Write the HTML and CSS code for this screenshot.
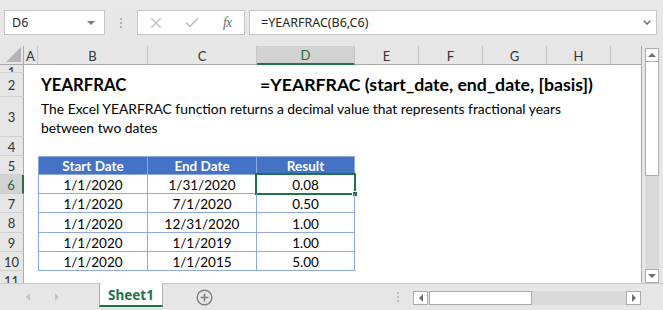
FILE: index.html
```html
<!DOCTYPE html>
<html>
<head>
<meta charset="utf-8">
<title>YEARFRAC</title>
<link rel="stylesheet" href="styles.css">
</head>
<body>
<div class="app">
  <div class="fbar">
    <div class="namebox"><span>D6</span><span class="caret"></span></div>
    <div class="grip"><i></i><i></i><i></i></div>
    <div class="fxbox">
      <svg class="ic-x" width="12" height="10" viewBox="0 0 12 10"><path d="M1.5 0.5 L10.5 9.5 M10.5 0.5 L1.5 9.5" stroke="#bdbdbd" stroke-width="1.3" fill="none"/></svg>
      <svg class="ic-ok" width="14" height="11" viewBox="0 0 14 11"><path d="M1 5.5 L5 9.5 L13 1" stroke="#bdbdbd" stroke-width="1.5" fill="none"/></svg>
      <span class="fx">fx</span>
    </div>
    <div class="finput">
      <span>=YEARFRAC(B6,C6)</span>
      <svg width="8" height="5" viewBox="0 0 8 5"><path d="M0.8 0.8 L4 4 L7.2 0.8" stroke="#6e6e6e" stroke-width="1.5" fill="none"/></svg>
    </div>
  </div>

  <div class="main">
    <div class="sheetwrap">
      <div class="row colhdr">
        <div class="ch corner"><svg width="15" height="15" viewBox="0 0 15 15"><polygon points="15,0 15,15 0,15" fill="#b4b4b4"/></svg></div>
        <div class="ch">A</div>
        <div class="ch">B</div>
        <div class="ch">C</div>
        <div class="ch active">D</div>
        <div class="ch">E</div>
        <div class="ch">F</div>
        <div class="ch">G</div>
        <div class="ch">H</div>
        <div class="ch last"></div>
      </div>

      <div class="row r1"><div class="rh">1</div></div>

      <div class="row r2">
        <div class="rh">2</div>
        <div class="cell title tB">YEARFRAC</div>
        <div class="cell title tD">=YEARFRAC (start_date, end_date, [basis])</div>
      </div>

      <div class="row r3">
        <div class="rh">3</div>
        <div class="cell desc">The Excel YEARFRAC function returns a decimal value that represents fractional years<br>between two dates</div>
      </div>

      <div class="row r4"><div class="rh">4</div></div>

      <div class="row r19">
        <div class="rh">5</div>
        <div class="tc th first top">Start Date</div>
        <div class="tc th top">End Date</div>
        <div class="tc th top">Result</div>
      </div>

      <div class="row r19">
        <div class="rh active">6</div>
        <div class="tc first">1/1/2020</div>
        <div class="tc">1/31/2020</div>
        <div class="tc sel">0.08<span class="selbox"></span><span class="handle"></span></div>
      </div>

      <div class="row r19">
        <div class="rh">7</div>
        <div class="tc first">1/1/2020</div>
        <div class="tc">7/1/2020</div>
        <div class="tc">0.50</div>
      </div>

      <div class="row r20">
        <div class="rh">8</div>
        <div class="tc first">1/1/2020</div>
        <div class="tc">12/31/2020</div>
        <div class="tc">1.00</div>
      </div>

      <div class="row r19">
        <div class="rh">9</div>
        <div class="tc first">1/1/2020</div>
        <div class="tc">1/1/2019</div>
        <div class="tc">1.00</div>
      </div>

      <div class="row r19">
        <div class="rh">10</div>
        <div class="tc first">1/1/2020</div>
        <div class="tc">1/1/2015</div>
        <div class="tc">5.00</div>
      </div>

      <div class="row r19"><div class="rh">11</div></div>
    </div>

    <div class="vscroll">
      <div class="sbtn"><span class="tri-up"></span></div>
      <div class="vthumb"></div>
      <div class="vtrack"></div>
      <div class="sbtn"><span class="tri-down"></span></div>
    </div>
  </div>

  <div class="tabbar">
    <div class="nav"><span class="tri-left"></span><span class="tri-right"></span></div>
    <div class="tab">Sheet1</div>
    <svg class="plus" width="17" height="17" viewBox="0 0 17 17"><circle cx="8.5" cy="8.5" r="7.3" stroke="#7f7f7f" stroke-width="1.4" fill="none"/><path d="M8.5 4.6 V12.4 M4.6 8.5 H12.4" stroke="#7f7f7f" stroke-width="1.6"/></svg>
    <div class="hgrip"><i></i><i></i><i></i></div>
    <div class="hscroll">
      <div class="sbtn h"><span class="tri-l"></span></div>
      <div class="hthumb"></div>
      <div class="htrack"></div>
      <div class="sbtn h"><span class="tri-r"></span></div>
    </div>
  </div>
</div>
</body>
</html>
```

FILE: styles.css
```css
* { box-sizing: border-box; margin: 0; padding: 0; }

body {
  width: 663px;
  height: 310px;
  overflow: hidden;
  background: #e6e6e6;
  font-family: Lato, "Open Sans", sans-serif;
  color: #000;
}

.app {
  display: flex;
  flex-direction: column;
  height: 310px;
}

/* ---------- formula bar ---------- */
.fbar {
  height: 46px;
  display: flex;
  align-items: flex-start;
  padding: 10px 6px 0 4px;
  background: linear-gradient(#e9e9e9, #e6e6e6);
}

.namebox {
  width: 101px;
  height: 25px;
  background: #fff;
  border: 1px solid #c6c6c6;
  display: flex;
  align-items: center;
  justify-content: space-between;
  padding: 0 9px 0 7px;
  font: 12.5px "Noto Sans", sans-serif;
  color: #262626;
}

.caret {
  width: 0;
  height: 0;
  border-left: 4px solid transparent;
  border-right: 4px solid transparent;
  border-top: 4px solid #7a7a7a;
}

.grip {
  width: 32px;
  height: 25px;
  display: flex;
  flex-direction: column;
  align-items: center;
  justify-content: center;
  gap: 2px;
}

.grip i, .hgrip i {
  display: block;
  width: 2px;
  height: 2px;
  background: #b4b4b4;
}

.fxbox {
  width: 108px;
  height: 25px;
  background: #fff;
  border: 1px solid #c6c6c6;
  display: flex;
  align-items: center;
  padding-left: 12px;
}

.ic-x { margin-right: 23px; }
.ic-ok { margin-right: 24px; }

.fx {
  font: italic 14px "Liberation Serif", serif;
  color: #6e6e6e;
  letter-spacing: -1px;
}

.finput {
  flex: 1;
  margin-left: 4px;
  height: 25px;
  background: #fff;
  border: 1px solid #c6c6c6;
  display: flex;
  align-items: center;
  justify-content: space-between;
  padding: 0 5px 0 11px;
  font: 12.5px "Noto Sans", sans-serif;
  color: #262626;
}

/* ---------- sheet ---------- */
.main {
  height: 237px;
  display: flex;
  align-items: flex-start;
}

.sheetwrap {
  width: 642px;
  height: 237px;
  overflow: hidden;
  background: #fff;
  border-right: 1px solid #ababab;
}

.row {
  display: grid;
  grid-template-columns: 24px 14px 110px 109px 98px 64px 64px 64px 64px 30px;
  height: 19px;
}

.colhdr {
  background: #e6e6e6;
}

.r1 { height: 8px; overflow: hidden; }
.r2 { height: 24px; }
.r3 { height: 40px; }
.r4 { height: 19px; }
.r19 { height: 19px; }
.r20 { height: 20px; }

.ch {
  display: flex;
  align-items: center;
  justify-content: center;
  font-size: 13px;
  color: #333;
  border-right: 1px solid #c6c6c6;
  border-bottom: 1px solid #ababab;
  padding-top: 1px;
}

.ch.corner {
  justify-content: flex-end;
  align-items: flex-end;
  padding: 0 2px 2px 0;
  border-right: 1px solid #ababab;
}

.ch.corner svg { display: block; }

.ch.active {
  background: #d2d2d2;
  color: #1e6b40;
  border-bottom: 2px solid #217346;
}

.ch.last { border-right: none; }

.rh {
  grid-column: 1;
  background: #e6e6e6;
  border-right: 1px solid #ababab;
  border-bottom: 1px solid #d0d0d0;
  display: flex;
  align-items: center;
  justify-content: center;
  font-size: 13px;
  color: #333;
  padding-top: 1px;
  overflow: hidden;
}

.r1 .rh { align-items: flex-start; padding-top: 0; line-height: 14px; height: 8px; }

.rh.active {
  background: #d2d2d2;
  color: #1e6b40;
  border-right: 2px solid #217346;
}

.cell {
  display: flex;
  align-items: flex-end;
  padding-left: 3px;
  white-space: nowrap;
}

.title {
  font-weight: 700;
  font-size: 16.7px;
  line-height: 20px;
  padding-bottom: 2px;
}

.tB { grid-column: 3 / span 2; }
.tD { grid-column: 5 / span 5; font-size: 17.7px; }

.desc {
  grid-column: 3 / span 7;
  font-size: 13.85px;
  line-height: 19px;
  white-space: normal;
  display: block;
  align-self: end;
}

/* ---------- table ---------- */
.tc {
  display: flex;
  align-items: flex-end;
  justify-content: center;
  font-size: 13.5px;
  line-height: 16px;
  border-right: 1px solid #8eaadb;
  border-bottom: 1px solid #8eaadb;
  position: relative;
}

.tc.first { grid-column: 3; border-left: 1px solid #8eaadb; }
.tc.top { border-top: 1px solid #8eaadb; }

.tc.th {
  background: #4472c4;
  color: #fff;
  font-weight: 700;
}

.selbox {
  position: absolute;
  left: -2px;
  top: -2px;
  right: -2px;
  bottom: -2px;
  border: 2px solid #217346;
}

.handle {
  position: absolute;
  right: -4px;
  bottom: -4px;
  width: 6px;
  height: 6px;
  background: #217346;
  border: 1px solid #fff;
}

/* ---------- vertical scrollbar ---------- */
.vscroll {
  width: 14px;
  margin-left: 3px;
  height: 237px;
  padding-top: 2px;
  display: flex;
  flex-direction: column;
}

.sbtn {
  height: 14px;
  background: #fff;
  border: 1px solid #ababab;
  display: flex;
  align-items: center;
  justify-content: center;
  flex: none;
}

.sbtn.h { width: 15px; height: 14px; }

.vthumb {
  height: 114px;
  background: #fff;
  border: 1px solid #ababab;
  border-top: none;
  flex: none;
}

.vtrack {
  flex: 1;
  background: #dadada;
}

.tri-up { width: 0; height: 0; border-left: 4px solid transparent; border-right: 4px solid transparent; border-bottom: 4px solid #6e6e6e; }
.tri-down { width: 0; height: 0; border-left: 4px solid transparent; border-right: 4px solid transparent; border-top: 4px solid #6e6e6e; }
.tri-l { width: 0; height: 0; border-top: 4px solid transparent; border-bottom: 4px solid transparent; border-right: 4px solid #6e6e6e; }
.tri-r { width: 0; height: 0; border-top: 4px solid transparent; border-bottom: 4px solid transparent; border-left: 4px solid #6e6e6e; }

/* ---------- tab bar ---------- */
.tabbar {
  height: 27px;
  border-top: 1px solid #c6c6c6;
  display: flex;
  align-items: flex-start;
}

.nav {
  width: 99px;
  height: 26px;
  display: flex;
  align-items: center;
  padding-left: 26px;
  gap: 25px;
}

.tri-left { width: 0; height: 0; border-top: 4px solid transparent; border-bottom: 4px solid transparent; border-right: 4px solid #c4c4c4; }
.tri-right { width: 0; height: 0; border-top: 4px solid transparent; border-bottom: 4px solid transparent; border-left: 4px solid #c4c4c4; }

.tab {
  width: 64px;
  height: 24px;
  margin-top: -1px;
  background: #fff;
  border-left: 1px solid #ababab;
  border-right: 1px solid #ababab;
  border-bottom: 2px solid #217346;
  display: flex;
  align-items: center;
  justify-content: center;
  font: 700 13.5px "Noto Sans", sans-serif;
  color: #217346;
  padding-top: 1px;
}

.plus {
  margin: 5px 0 0 33px;
  flex: none;
}

.hgrip {
  margin: 8px 0 0 184px;
  display: flex;
  flex-direction: column;
  gap: 2px;
}

.hgrip i { background: #bcbcbc; }

.hscroll {
  margin: 7px 0 0 14px;
  width: 228px;
  height: 14px;
  display: flex;
}

.hthumb {
  width: 103px;
  margin-left: 1px;
  background: #fff;
  border: 1px solid #ababab;
}

.htrack {
  flex: 1;
  background: #dadada;
}
```
